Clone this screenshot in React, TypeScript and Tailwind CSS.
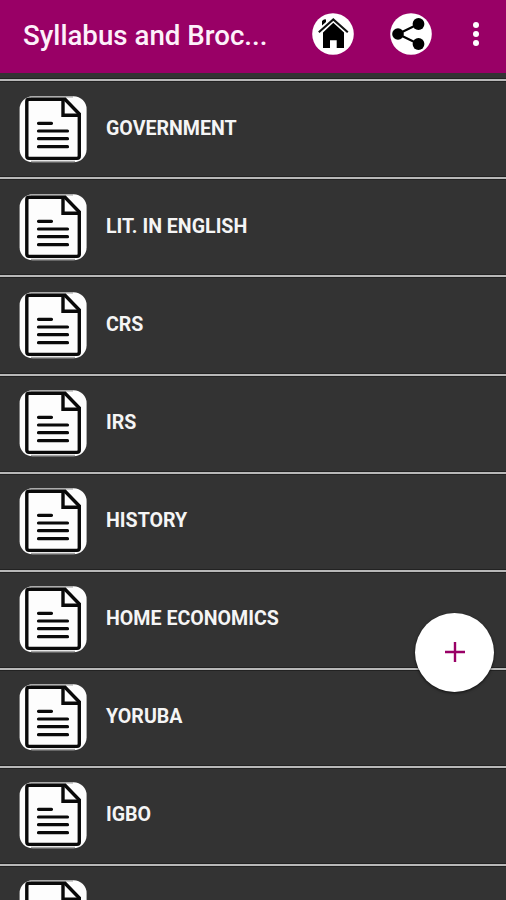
import React from 'react';

const subjects = [
  'GOVERNMENT',
  'LIT. IN ENGLISH',
  'CRS',
  'IRS',
  'HISTORY',
  'HOME ECONOMICS',
  'YORUBA',
  'IGBO',
];

function DocumentIcon() {
  return (
    <svg width="68" height="68" viewBox="0 0 68 68" fill="none" className="shrink-0">
      <rect x="0.6" y="1.2" width="67" height="66" rx="13" fill="#fdfdfd" />
      <path d="M12 1.8H54M12 66.4H56" stroke="#a3a3a3" strokeWidth="1.2" />
      <path
        d="M10 4.2H46L60.3 19V61Q60.3 63.4 58 63.4H10Q7.8 63.4 7.8 61V6.4Q7.8 4.2 10 4.2Z"
        stroke="#0a0a0a"
        strokeWidth="3.4"
      />
      <path d="M44 4.5V20.3H60" stroke="#0a0a0a" strokeWidth="3.4" />
      <path
        d="M19.5 28.3H32.5M19.5 36H48.5M19.5 43.7H48.5M19.5 51.7H48.5"
        stroke="#0a0a0a"
        strokeWidth="3.2"
        strokeLinecap="round"
      />
    </svg>
  );
}

function HomeIcon() {
  return (
    <svg width="42" height="42" viewBox="0 0 42 42" fill="none">
      <circle cx="21" cy="21" r="20.8" fill="#fff" />
      <path d="M10 8Q12 5.6 14 6.4V9L10 12.5Z" fill="#000" />
      <path d="M6.8 19.2L21.3 6.4L35.8 19.2" stroke="#111" strokeWidth="2.1" />
      <path d="M21.3 9.8L32 19.5V35H24.7V27.3H18V35H11V19.5Z" fill="#000" />
    </svg>
  );
}

function ShareIcon() {
  return (
    <svg width="42" height="42" viewBox="0 0 42 42" fill="none">
      <circle cx="21" cy="21" r="20.8" fill="#fff" />
      <path d="M28.5 11L8 21L28.5 31" stroke="#000" strokeWidth="2.2" />
      <circle cx="8" cy="21" r="5.8" fill="#000" />
      <circle cx="28.5" cy="11" r="5.9" fill="#000" />
      <circle cx="28.5" cy="31" r="5.9" fill="#000" />
    </svg>
  );
}

function Header() {
  return (
    <header className="flex h-[73px] shrink-0 items-center bg-[#990066] pl-[23px] pr-[27px]">
      <h1 className="w-[288.5px] whitespace-nowrap pb-[2px] text-[27.7px] font-medium leading-none text-[#fdf0fa]">
        Syllabus and Broc...
      </h1>
      <div className="flex flex-1 items-center pb-[5px]">
        <button className="mr-9">
          <HomeIcon />
        </button>
        <button>
          <ShareIcon />
        </button>
        <button className="ml-auto flex flex-col gap-[2.6px]">
          <span className="size-[6px] rounded-full bg-white" />
          <span className="size-[6px] rounded-full bg-white" />
          <span className="size-[6px] rounded-full bg-white" />
        </button>
      </div>
    </header>
  );
}

function App() {
  return (
    <div className="relative flex h-[900px] w-[506px] flex-col overflow-hidden bg-[#333333] font-['Roboto',sans-serif]">
      <Header />
      <ul className="mt-[6.4px]">
        {subjects.map((subject) => (
          <li
            key={subject}
            className="flex h-[98.06px] items-start border-t-2 border-[#b8b8b8] pl-[19px] pt-[13.6px] shadow-[0_-1px_0_#222,inset_0_1px_0_#222]"
          >
            <DocumentIcon />
            <span className="ml-[19px] mt-[22px] text-[19.6px] font-bold leading-6 text-[#f5f5f5]">
              {subject}
            </span>
          </li>
        ))}
        <li className="flex h-[98.06px] items-start border-t-2 border-[#b8b8b8] pl-[19px] pt-[13.6px] shadow-[0_-1px_0_#222,inset_0_1px_0_#222]">
          <DocumentIcon />
        </li>
      </ul>
      <button className="absolute left-[415px] top-[612.5px] flex size-[79px] items-center justify-center rounded-full bg-white shadow-[0_1px_3px_rgba(0,0,0,0.7)]">
        <svg width="20" height="20" viewBox="0 0 20 20">
          <path d="M10 0V20M0 10H20" stroke="#990066" strokeWidth="2.4" />
        </svg>
      </button>
    </div>
  );
}

export default App;
